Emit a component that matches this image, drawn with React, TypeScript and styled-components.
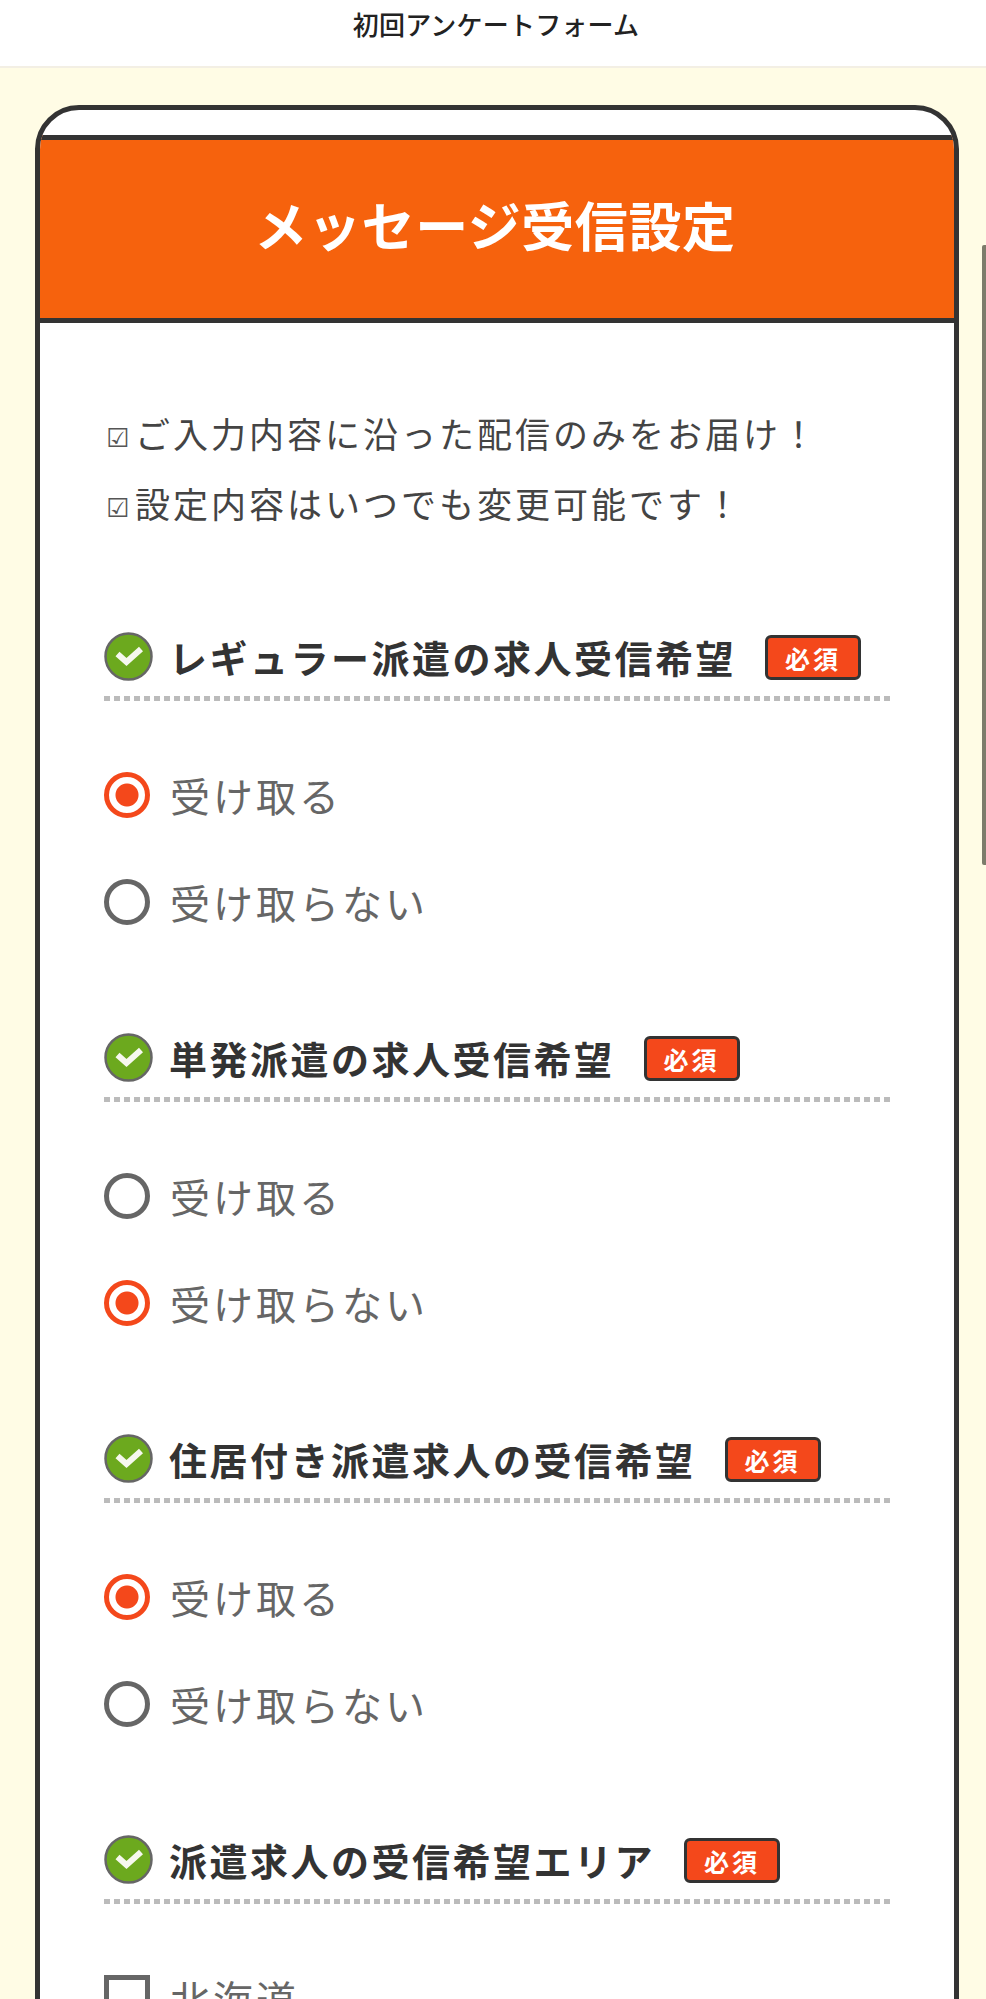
import { createGlobalStyle } from "styled-components";
import styled from "styled-components";

const GlobalStyle = createGlobalStyle`
    html, body {
        margin: 0;
        padding: 0;
        height: 1999px;
        overflow: hidden;
        background-color: #fffce5;
    }
    body {
        font-family: "Noto Sans CJK JP", "Noto Sans", sans-serif;
        color: #333;
    }
`;

const TopBar = styled.header`
    height: 66px;
    display: flex;
    align-items: flex-start;
    justify-content: center;
    padding-left: 6px;
    background-color: #fff;
    border-bottom: 2px solid #f3efe4;
`;

const TopTitle = styled.h1`
    margin: 6px 0 0;
    font-size: 26px;
    line-height: 36px;
    font-weight: 500;
    letter-spacing: 0.2px;
    color: #222;
`;

const Page = styled.main`
    padding: 37px 27px 0 35px;
`;

const Card = styled.section`
    background-color: #fff;
    border: 5px solid #333;
    border-radius: 44px 44px 0 0;
    padding-top: 25px;
    overflow: hidden;
`;

const Banner = styled.div`
    height: 178px;
    display: flex;
    align-items: center;
    justify-content: center;
    background-color: #f6620d;
    border-top: 5px solid #333;
    border-bottom: 5px solid #333;
`;

const BannerTitle = styled.h2`
    margin: 0 4px 10px 0;
    font-size: 53px;
    line-height: 70px;
    font-weight: 700;
    letter-spacing: 0.6px;
    color: #fff;
`;

const Body = styled.div`
    padding: 74px 63px 0 64px;
`;

const Notes = styled.ul`
    list-style: none;
    margin: 0 0 95px;
    padding: 0;
`;

const Note = styled.li`
    height: 70px;
    display: flex;
    align-items: center;
    font-size: 35px;
    letter-spacing: 3px;
    color: #444;
`;

const NoteMark = styled.span`
    width: 29px;
    margin-left: 2px;
    padding-top: 11px;
    font-size: 26px;
    letter-spacing: 0;
    font-family: "DejaVu Sans", sans-serif;
    color: #555;
`;

const Section = styled.div`
    margin-bottom: 108px;
`;

const Heading = styled.div`
    display: flex;
    align-items: center;
    height: 49px;
`;

const HeadingIcon = styled.svg`
    width: 49px;
    height: 49px;
    flex-shrink: 0;
    margin-right: 16px;
`;

const HeadingText = styled.h3`
    margin: 0;
    font-size: 38px;
    line-height: 49px;
    font-weight: 700;
    letter-spacing: 2.5px;
    color: #333;
`;

const Badge = styled.span`
    margin: 2px 0 0 29px;
    width: 96px;
    height: 45px;
    box-sizing: border-box;
    display: flex;
    align-items: center;
    justify-content: center;
    background-color: #f4481b;
    border: 3px solid #333;
    border-radius: 6px;
    color: #fff;
    font-size: 25px;
    font-weight: 700;
    letter-spacing: 3px;
`;

const Dots = styled.div`
    height: 5px;
    margin-top: 15px;
    margin-bottom: 71px;
    background-image: repeating-linear-gradient(to right, #bbb 0 6px, transparent 6px 10px);
`;

const Options = styled.div`
    display: flex;
    flex-direction: column;
    gap: 61px;
`;

const Option = styled.label`
    display: flex;
    align-items: center;
    height: 46px;
    font-size: 40px;
    letter-spacing: 3px;
    color: #666;
`;

const Radio = styled.span<{ $checked: boolean }>`
    width: 46px;
    height: 46px;
    box-sizing: border-box;
    flex-shrink: 0;
    margin-right: 20px;
    border-radius: 50%;
    border: 5px solid ${(props) => (props.$checked ? "#f4481b" : "#666")};
    background: ${(props) =>
        props.$checked
            ? "radial-gradient(circle, #f4481b 0 11px, #fff 12px)"
            : "#fff"};
`;

const CheckBox = styled.span`
    width: 46px;
    height: 46px;
    box-sizing: border-box;
    flex-shrink: 0;
    margin-right: 20px;
    border: 5px solid #666;
`;

const ScrollThumb = styled.div`
    position: absolute;
    top: 245px;
    right: 0;
    width: 4px;
    height: 620px;
    background-color: #7d7c6b;
    border-radius: 2px 0 0 2px;
`;

interface IQuestion {
    title: string;
    accept: boolean;
}

const questions: IQuestion[] = [
    { title: "レギュラー派遣の求人受信希望", accept: true },
    { title: "単発派遣の求人受信希望", accept: false },
    { title: "住居付き派遣求人の受信希望", accept: true },
];

function CheckIcon() {
    return (
        <HeadingIcon viewBox="0 0 49 49">
            <circle cx="24.5" cy="24.5" r="23" fill="#6ca91e" stroke="#666" strokeWidth="2.5" />
            <path d="M13.5 22l9 8L37 17" fill="none" stroke="#f6f8ee" strokeWidth="6" />
        </HeadingIcon>
    );
}

function SectionHead({ title }: { title: string }) {
    return (
        <>
            <Heading>
                <CheckIcon />
                <HeadingText>{title}</HeadingText>
                <Badge>必須</Badge>
            </Heading>
            <Dots />
        </>
    );
}

function App() {
    return (
        <>
            <GlobalStyle />
            <TopBar>
                <TopTitle>初回アンケートフォーム</TopTitle>
            </TopBar>
            <Page>
                <Card>
                    <Banner>
                        <BannerTitle>メッセージ受信設定</BannerTitle>
                    </Banner>
                    <Body>
                        <Notes>
                            <Note><NoteMark>☑</NoteMark>ご入力内容に沿った配信のみをお届け！</Note>
                            <Note><NoteMark>☑</NoteMark>設定内容はいつでも変更可能です！</Note>
                        </Notes>
                        {questions.map((q) => (
                            <Section key={q.title}>
                                <SectionHead title={q.title} />
                                <Options>
                                    <Option><Radio $checked={q.accept} />受け取る</Option>
                                    <Option><Radio $checked={!q.accept} />受け取らない</Option>
                                </Options>
                            </Section>
                        ))}
                        <Section>
                            <SectionHead title="派遣求人の受信希望エリア" />
                            <Options>
                                <Option><CheckBox />北海道</Option>
                            </Options>
                        </Section>
                    </Body>
                </Card>
            </Page>
            <ScrollThumb />
        </>
    );
}

export default App;
